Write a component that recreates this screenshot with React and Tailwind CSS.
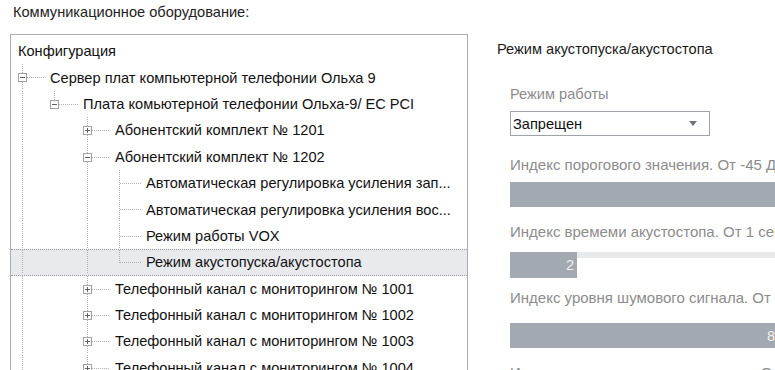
import React from "react";

const GUIDES = [11, 43, 76, 108];
const TEXT_X = [39, 72, 104, 135];

const rows = [
  { level: 0, text: "Сервер плат компьютерной телефонии Ольха 9", box: "minus", pass: [], conn: "mid" },
  { level: 1, text: "Плата комьютерной телефонии Ольха-9/ EC PCI", box: "minus", pass: [0], conn: "last" },
  { level: 2, text: "Абонентский комплект № 1201", box: "plus", pass: [0], conn: "mid" },
  { level: 2, text: "Абонентский комплект № 1202", box: "minus", pass: [0], conn: "mid" },
  { level: 3, text: "Автоматическая регулировка усиления зап...", pass: [0, 2], conn: "mid" },
  { level: 3, text: "Автоматическая регулировка усиления вос...", pass: [0, 2], conn: "mid" },
  { level: 3, text: "Режим работы VOX", pass: [0, 2], conn: "mid" },
  { level: 3, text: "Режим акустопуска/акустостопа", pass: [0, 2], conn: "last", selected: true },
  { level: 2, text: "Телефонный канал с мониторингом № 1001", box: "plus", pass: [0], conn: "mid" },
  { level: 2, text: "Телефонный канал с мониторингом № 1002", box: "plus", pass: [0], conn: "mid" },
  { level: 2, text: "Телефонный канал с мониторингом № 1003", box: "plus", pass: [0], conn: "mid" },
  { level: 2, text: "Телефонный канал с мониторингом № 1004", box: "plus", pass: [0], conn: "mid" },
];

const LINE = "#b0b0b0";

function TreeRow({ row }) {
  const h = row.selected ? 24.4 : 26.4;
  const cy = Math.floor(h / 2);
  const g = GUIDES[row.level];
  const w = TEXT_X[row.level];

  return (
    <div
      className={
        row.selected
          ? "flex items-center h-[26.4px] bg-[#e9eaee] border-y border-dotted border-[#9a9a9a]"
          : "flex items-center h-[26.4px]"
      }
    >
      <svg width={w} height={h} className="shrink-0" shapeRendering="crispEdges">
        {row.pass.map((p) => (
          <line key={p} x1={GUIDES[p] + 0.5} x2={GUIDES[p] + 0.5} y1={0} y2={h} stroke={LINE} strokeDasharray="1 1" />
        ))}
        <line
          x1={g + 0.5}
          x2={g + 0.5}
          y1={0}
          y2={row.conn === "last" ? cy + 1 : h}
          stroke={LINE}
          strokeDasharray="1 1"
        />
        <line
          x1={row.box ? g + 5 : g + 1}
          x2={w - 5}
          y1={cy + 0.5}
          y2={cy + 0.5}
          stroke={LINE}
          strokeDasharray="1 1"
        />
        {row.box && (
          <g>
            <rect x={g - 4 + 0.5} y={cy - 4 + 0.5} width={8} height={8} fill="#fff" stroke="#a2a2a2" />
            <line x1={g - 2} x2={g + 3} y1={cy + 0.5} y2={cy + 0.5} stroke="#606060" />
            {row.box === "plus" && (
              <line x1={g + 0.5} x2={g + 0.5} y1={cy - 2} y2={cy + 3} stroke="#606060" />
            )}
          </g>
        )}
      </svg>
      <span className="whitespace-nowrap text-[#111]">{row.text}</span>
    </div>
  );
}

function Bar({ value, className }) {
  return (
    <div className={`h-[25px] bg-[#a3a9b0] flex items-center justify-end pr-[4px] text-[#eef0f2] ${className}`}>
      {value}
    </div>
  );
}

export default function App() {
  return (
    <div className="w-[775px] h-[370px] overflow-hidden bg-white text-[14.6px] leading-[16px] font-['Liberation_Sans',Arial,sans-serif]">
      <div className="h-[34px] pl-[13px] pt-[4px] text-[#222]">Коммуникационное оборудование:</div>

      <div className="flex">
        <div className="ml-[10px] w-[458px] h-[345px] shrink-0 border border-[#a9acb1] pt-[3px] overflow-hidden">
          <div className="h-[26.4px] flex items-center pl-[7px] text-[#111]">Конфигурация</div>
          {rows.map((r, i) => (
            <TreeRow key={i} row={r} />
          ))}
        </div>

        <div className="ml-[29px] flex flex-col shrink-0">
          <div className="mt-[7px] text-[#1a1a1a]">Режим акустопуска/акустостопа</div>

          <div className="pl-[13px] flex flex-col">
            <div className="mt-[29px] text-[#8c8c8c]">Режим работы</div>
            <div className="mt-[9px] w-[200px] h-[25px] border border-[#9fa3a8] flex items-center justify-between pl-[2px] pr-[12px] text-[#111]">
              <span>Запрещен</span>
              <svg width="8" height="5" viewBox="0 0 8 5">
                <path d="M0 0H8L4 5Z" fill="#6e747b" />
              </svg>
            </div>

            <div className="mt-[21px] text-[15px] text-[#8c8c8c] whitespace-nowrap">Индекс порогового значения. От -45 Дб до 0 Дб</div>
            <Bar value="" className="mt-[9px] w-[280px]" />

            <div className="mt-[17px] text-[15px] text-[#8c8c8c] whitespace-nowrap">Индекс времеми акустостопа. От 1 сек до 10 сек</div>
            <div className="mt-[12px] flex w-[280px] h-[26px]">
              <div className="w-[67px] h-full bg-[#a3a9b0] flex items-center justify-end pr-[3px] text-[#eef0f2]">2</div>
              <div className="flex-1 h-[6px] bg-[#e8e9eb]" />
            </div>

            <div className="mt-[12px] text-[15px] text-[#8c8c8c] whitespace-nowrap">Индекс уровня шумового сигнала. От -45 Дб до 0 Дб</div>
            <Bar value="8" className="mt-[17px] w-[269px]" />

            <div className="mt-[17px] text-[15px] text-[#8c8c8c] whitespace-nowrap">Индекс уровня голосового сигнала. От 0 до 10</div>
          </div>
        </div>
      </div>
    </div>
  );
}
